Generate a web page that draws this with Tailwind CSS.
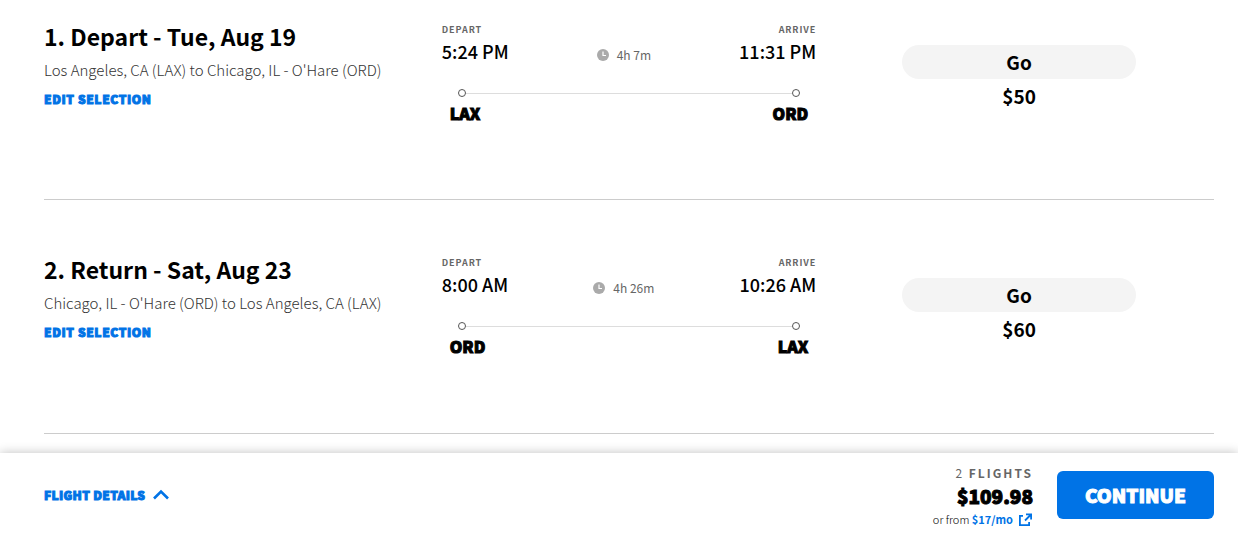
<!DOCTYPE html>
<html lang="en">
<head>
  <meta charset="UTF-8">
  <meta name="viewport" content="width=device-width, initial-scale=1">
  <title>Flight Summary</title>
  <script src="https://cdn.jsdelivr.net/npm/@tailwindcss/browser@4"></script>
</head>
<body class="bg-white text-black h-screen flex flex-col overflow-hidden font-['Noto_Sans_CJK_SC','Noto_Sans',sans-serif]">

  <main class="flex-1 min-h-0 overflow-hidden pl-11 pr-6">

    <!-- Outbound flight -->
    <section class="grid grid-cols-[34fr_32fr_34fr] items-start pt-5 pb-[74px] border-b border-[#cccccc]">
      <div>
        <h2 class="text-[23px] leading-8 font-bold whitespace-nowrap">1. Depart - Tue, Aug 19</h2>
        <p class="pt-1 text-[15px] leading-7 font-light text-[#333333] whitespace-nowrap">Los Angeles, CA (LAX) to Chicago, IL - O'Hare (ORD)</p>
        <a href="#" class="block text-[12px] leading-[30px] font-black tracking-wider text-[#0073e6] [-webkit-text-stroke:1px]">EDIT SELECTION</a>
      </div>
      <div>
        <div class="flex justify-between">
          <div>
            <p class="text-[9px] leading-5 font-bold tracking-widest text-[#666666]">DEPART</p>
            <p class="text-[18px] leading-[22px] font-medium">5:24 PM</p>
          </div>
          <div class="flex items-center gap-2 pt-7 text-[12px] leading-[14px] text-[#666666]">
            <svg class="size-3" viewBox="0 0 12 12"><circle cx="6" cy="6" r="6" fill="#aaa"/><path d="M6 2.5V6.5H9" fill="none" stroke="#fff" stroke-width="1.2"/></svg>
            4h 7m
          </div>
          <div class="text-right">
            <p class="text-[9px] leading-5 font-bold tracking-widest text-[#666666]">ARRIVE</p>
            <p class="text-[18px] leading-[22px] font-medium">11:31 PM</p>
          </div>
        </div>
        <div class="flex items-center px-4 pt-[27px]">
          <span class="size-2 rounded-full border border-[#555555]"></span>
          <span class="flex-1 h-px bg-[#dddddd]"></span>
          <span class="size-2 rounded-full border border-[#555555]"></span>
        </div>
        <div class="flex justify-between px-2 pt-1 text-[16px] leading-6 font-black [-webkit-text-stroke:1px]">
          <span>LAX</span><span>ORD</span>
        </div>
      </div>
      <div class="pt-[25px] pl-[86px] pr-[78px] text-center text-[19px] font-bold">
        <p class="rounded-full bg-[#f4f4f4] leading-[34px]">Go</p>
        <p class="leading-[34px]">$50</p>
      </div>
    </section>

    <!-- Return flight -->
    <section class="grid grid-cols-[34fr_32fr_34fr] items-start pt-[53px] pb-[75px] border-b border-[#cccccc]">
      <div>
        <h2 class="text-[23px] leading-8 font-bold whitespace-nowrap">2. Return - Sat, Aug 23</h2>
        <p class="pt-1 text-[15px] leading-7 font-light text-[#333333] whitespace-nowrap">Chicago, IL - O'Hare (ORD) to Los Angeles, CA (LAX)</p>
        <a href="#" class="block text-[12px] leading-[30px] font-black tracking-wider text-[#0073e6] [-webkit-text-stroke:1px]">EDIT SELECTION</a>
      </div>
      <div>
        <div class="flex justify-between">
          <div>
            <p class="text-[9px] leading-5 font-bold tracking-widest text-[#666666]">DEPART</p>
            <p class="text-[18px] leading-[22px] font-medium">8:00 AM</p>
          </div>
          <div class="flex items-center gap-2 pt-7 text-[12px] leading-[14px] text-[#666666]">
            <svg class="size-3" viewBox="0 0 12 12"><circle cx="6" cy="6" r="6" fill="#aaa"/><path d="M6 2.5V6.5H9" fill="none" stroke="#fff" stroke-width="1.2"/></svg>
            4h 26m
          </div>
          <div class="text-right">
            <p class="text-[9px] leading-5 font-bold tracking-widest text-[#666666]">ARRIVE</p>
            <p class="text-[18px] leading-[22px] font-medium">10:26 AM</p>
          </div>
        </div>
        <div class="flex items-center px-4 pt-[27px]">
          <span class="size-2 rounded-full border border-[#555555]"></span>
          <span class="flex-1 h-px bg-[#dddddd]"></span>
          <span class="size-2 rounded-full border border-[#555555]"></span>
        </div>
        <div class="flex justify-between px-2 pt-1 text-[16px] leading-6 font-black [-webkit-text-stroke:1px]">
          <span>ORD</span><span>LAX</span>
        </div>
      </div>
      <div class="pt-[25px] pl-[86px] pr-[78px] text-center text-[19px] font-bold">
        <p class="rounded-full bg-[#f4f4f4] leading-[34px]">Go</p>
        <p class="leading-[34px]">$60</p>
      </div>
    </section>

  </main>

  <!-- Booking bar -->
  <footer class="relative shrink-0 flex items-start justify-between pl-11 pr-6 pt-3 pb-[18px] bg-white shadow-[0_0_10px_rgba(0,0,0,0.25)]">
    <button class="flex items-center gap-2 pt-5 text-[12px] leading-5 font-black tracking-wide text-[#0073e6] [-webkit-text-stroke:1px]">
      FLIGHT DETAILS
      <svg class="w-4 h-3" viewBox="0 0 16 12" fill="none" stroke="currentColor" stroke-width="2.6"><path d="M1 9.5L8 2.5L15 9.5"/></svg>
    </button>
    <div class="flex items-start gap-6">
      <div class="text-right">
        <p class="text-[12px] leading-4 font-bold tracking-[2px] text-[#666666]"><span class="font-normal">2</span> FLIGHTS</p>
        <p class="text-[19px] leading-[30px] font-black [-webkit-text-stroke:1px]">$109.98</p>
        <p class="flex items-center justify-end text-[11px] leading-3 font-light">
          or from&nbsp;<a href="#" class="flex items-center gap-1 font-bold text-[#0073e6]">$17/mo
            <svg class="size-4" viewBox="0 0 16 16" fill="none" stroke="currentColor" stroke-width="1.8"><path d="M6 4.9H2.9V14.1H12.1V11"/><path d="M9 3.4H14.1V8.5M14 3.5L8 9.5"/></svg>
          </a>
        </p>
      </div>
      <button class="mt-[6px] w-[157px] h-12 rounded-md bg-[#0073e6] text-white text-[19px] font-black [-webkit-text-stroke:1px]">CONTINUE</button>
    </div>
  </footer>

</body>
</html>
